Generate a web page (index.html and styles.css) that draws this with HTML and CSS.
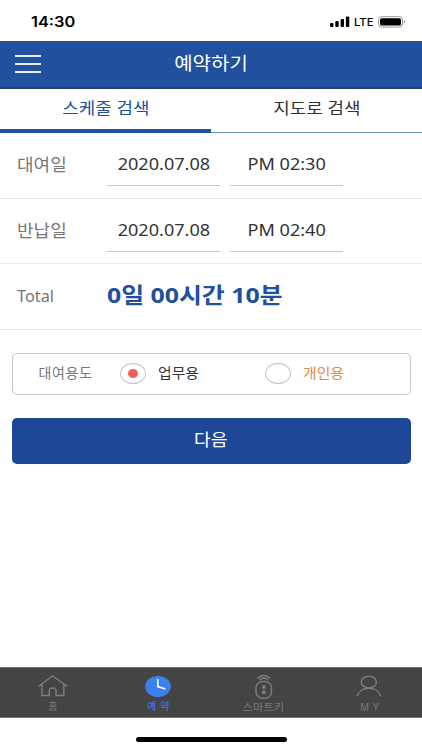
FILE: index.html
```
<!DOCTYPE html>
<html lang="ko">
<head>
    <meta charset="UTF-8">
    <meta name="viewport" content="width=device-width, initial-scale=1.0">
    <title>예약하기</title>
    <link rel="stylesheet" href="styles.css">
</head>
<body>
    <!-- Status bar -->
    <div class="status">
        <span class="clock">14:30</span>
        <div class="status-right">
            <svg class="signal" width="20" height="11" viewBox="0 0 20 11">
                <rect x="0" y="7" width="3.4" height="4" rx="1"/>
                <rect x="5.3" y="5" width="3.4" height="6" rx="1"/>
                <rect x="10.6" y="3" width="3.4" height="8" rx="1"/>
                <rect x="15.9" y="0.5" width="3.4" height="10.5" rx="1"/>
            </svg>
            <span class="lte">LTE</span>
            <svg class="battery" width="28" height="12" viewBox="0 0 28 12">
                <rect x="0.5" y="0.7" width="24" height="10.4" rx="3" fill="none" stroke="#999"/>
                <rect x="2" y="2.2" width="21" height="7.4" rx="1.6"/>
                <path d="M26 4.3c1.4.5 1.4 2.7 0 3.2z" fill="#888"/>
            </svg>
        </div>
    </div>

    <!-- Header -->
    <header class="header">
        <div class="menu">
            <span></span>
            <span></span>
            <span></span>
        </div>
        <h1>예약하기</h1>
    </header>

    <!-- Tabs -->
    <div class="tabs">
        <div class="tab active"><span>스케줄 검색</span></div>
        <div class="tab"><span>지도로 검색</span></div>
    </div>

    <!-- Schedule -->
    <div class="row">
        <div class="label"><span>대여일</span></div>
        <div class="field"><span>2020.07.08</span></div>
        <div class="field"><span class="time">PM 02:30</span></div>
    </div>
    <div class="row">
        <div class="label"><span>반납일</span></div>
        <div class="field"><span>2020.07.08</span></div>
        <div class="field"><span class="time">PM 02:40</span></div>
    </div>
    <div class="row">
        <div class="label"><span class="en">Total</span></div>
        <div class="total">0일 00시간 10분</div>
    </div>

    <!-- Purpose -->
    <div class="purpose">
        <span class="purpose-label">대여용도</span>
        <span class="radio checked"></span>
        <span class="option">업무용</span>
        <span class="radio second"></span>
        <span class="option personal">개인용</span>
    </div>

    <div class="next"><span>다음</span></div>

    <!-- Bottom navigation -->
    <nav class="nav">
        <div class="item">
            <svg width="32" height="26" viewBox="0 0 32 26">
                <path d="M1.5 13.5L15.5 2.800L30.500 13.500M5 11.300V22.500H12.300V18Q12.300 15 15.700 15T19 18V22.500H26.800V11.300"/>
            </svg>
            <span>홈</span>
        </div>
        <div class="item active">
            <svg width="32" height="26" viewBox="0 0 32 26">
                <ellipse cx="16" cy="13.500" rx="12.800" ry="10.500"/>
                <path d="M15.800 6V13.600L23.400 16.100"/>
            </svg>
            <span class="spaced">예약</span>
        </div>
        <div class="item">
            <svg width="32" height="26" viewBox="0 0 32 26">
                <rect x="8" y="8.500" width="15.500" height="16.700" rx="7" ry="6"/>
                <path d="M9.300 5.500Q15.800-.5 22.300 5.500M11.500 7.200Q15.800 2.800 20.100 7.200"/>
                <circle class="dot" cx="15.800" cy="14" r="2"/>
                <circle class="dot" cx="15.800" cy="19.300" r="2"/>
            </svg>
            <span class="key">스마트키</span>
        </div>
        <div class="item">
            <svg width="32" height="26" viewBox="0 0 32 26">
                <ellipse cx="15.800" cy="9" rx="7.600" ry="5.900"/>
                <path d="M4 23.200C7 12.600 24.500 12.600 27.700 23.200"/>
            </svg>
            <span class="my">MY</span>
        </div>
    </nav>
    <div class="home-bar"></div>
</body>
</html>
```
FILE: styles.css
```
* {
    box-sizing: border-box;
}

body {
    margin: 0;
    width: 422px;
    height: 750px;
    display: flex;
    flex-direction: column;
    overflow: hidden;
    background-color: #fff;
    color: #333;
    font-family: "Noto Sans", "Noto Sans CJK KR", sans-serif;
}

/* Status bar */
.status {
    height: 41px;
    flex: none;
    display: flex;
    justify-content: space-between;
    align-items: center;
    padding: 2px 16px 0 31px;
    color: #000;
    font-family: Inter, sans-serif;
}

.clock {
    font-size: 14px;
    font-weight: 600;
    transform: scaleX(1.17);
    transform-origin: left;
}

.status-right {
    display: flex;
    align-items: center;
}

.lte {
    width: 24px;
    margin-left: 4px;
    font-size: 11px;
    font-weight: 500;
    transform: scaleX(1.03);
    transform-origin: left;
}

/* Header */
.header {
    height: 48px;
    flex: none;
    display: grid;
    grid-template-columns: 58px 1fr 58px;
    align-items: center;
    padding-bottom: 2px;
    background-color: #21509e;
    border-bottom: 2px solid #1d427f;
    color: #fff;
}

.menu {
    display: flex;
    flex-direction: column;
    gap: 6px;
    width: 26px;
    margin: 2px 0 0 15px;
}

.menu span {
    height: 2px;
    background-color: #e8effa;
}

h1 {
    margin: 0;
    font-size: 18px;
    font-weight: 400;
    line-height: 26px;
    text-align: center;
    transform: scaleX(1.11);
}

/* Tabs */
.tabs {
    height: 44px;
    flex: none;
    display: flex;
}

.tab {
    width: 50%;
    height: 44px;
    padding-top: 7px;
    border-bottom: 1px solid #6d8fc6;
    font-size: 16px;
    line-height: 24px;
    text-align: center;
}

.tab span {
    display: inline-block;
    transform: scaleX(1.12);
}

.tab.active {
    border-bottom: 4px solid #21509e;
    color: #21509e;
}

/* Schedule rows */
.row {
    height: 65.5px;
    flex: none;
    display: flex;
    padding: 8px 17px 0;
    border-bottom: 1px solid #ebebeb;
}

.label {
    width: 90px;
    color: #777;
    font-size: 17px;
    line-height: 48px;
}

.label span {
    display: inline-block;
    transform: scaleX(1.06);
    transform-origin: left;
}

.label .en {
    font-size: 15.5px;
    transform: scaleX(1.05);
}

.field {
    width: 113px;
    height: 45px;
    margin-right: 10px;
    border-bottom: 1px solid #c8c8c8;
    font-size: 16px;
    line-height: 46px;
    text-align: center;
}

.field span {
    display: inline-block;
    transform: scaleX(1.13);
}

.total {
    color: #21509e;
    font-size: 22px;
    font-weight: 700;
    line-height: 44px;
    white-space: nowrap;
    transform: scaleX(1.13);
    transform-origin: left;
}

/* Purpose */
.purpose {
    height: 42px;
    flex: none;
    display: flex;
    align-items: center;
    margin: 23px 11.5px 0;
    border: 1px solid #c9c9c9;
    border-radius: 5px;
    font-size: 14px;
}

.purpose-label {
    width: 81px;
    padding-left: 26px;
    color: #777;
    letter-spacing: 0.6px;
    white-space: nowrap;
}

.purpose-label,
.option {
    line-height: 36px;
    padding-bottom: 1px;
}

.radio {
    display: flex;
    justify-content: center;
    align-items: center;
    width: 26px;
    height: 21px;
    margin-left: 26px;
    border: 1px solid #c4c4c4;
    border-radius: 50%;
}

.radio.checked::after {
    content: "";
    width: 10px;
    height: 9px;
    border-radius: 50%;
    background-color: #ea625d;
}

.option {
    width: 40px;
    margin-left: 12px;
    white-space: nowrap;
    transform: scaleX(1.06);
    transform-origin: left;
}

.radio.second {
    margin-left: 67px;
}

.personal {
    color: #e18a4c;
}

.next {
    height: 46px;
    flex: none;
    margin: 23px 11.5px 0;
    border-radius: 5px;
    background-color: #1f4798;
    color: #fff;
    font-size: 17px;
    line-height: 43px;
    text-align: center;
}

.next span {
    display: inline-block;
    transform: scaleX(1.07);
}

/* Bottom navigation */
.nav {
    height: 51px;
    flex: none;
    display: flex;
    margin-top: auto;
    padding-top: 5px;
    background-color: #444;
    border-top: 1px solid #777;
    border-bottom: 1px solid #777;
    color: #7b7b7b;
}

.item {
    width: 25%;
    display: flex;
    flex-direction: column;
    align-items: center;
    font-size: 10px;
    line-height: 14px;
}

.item svg {
    fill: none;
    stroke: #7d7d7d;
    stroke-width: 1.4;
}

.item .dot {
    fill: #7d7d7d;
    stroke: none;
}

.item.active {
    color: #3c80f0;
}

.item.active ellipse {
    fill: #3c80f0;
    stroke: none;
}

.item.active path {
    stroke: #fff;
    stroke-width: 1.6;
}

.spaced {
    letter-spacing: 4px;
    margin-right: -4px;
}

.key {
    line-height: 16px;
    transform: scaleX(1.13);
}

.my {
    line-height: 16px;
    letter-spacing: 4px;
    margin-right: -4px;
}

.home-bar {
    width: 151px;
    height: 5px;
    flex: none;
    margin: 19px auto 8px;
    border-radius: 3px;
    background-color: #000;
}
```
